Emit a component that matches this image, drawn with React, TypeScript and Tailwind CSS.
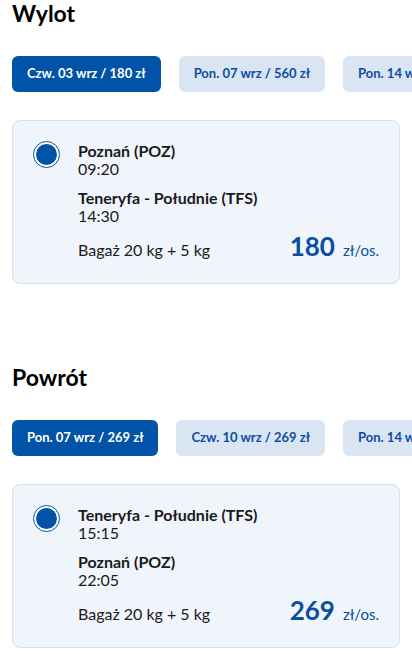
const font = { fontFamily: 'Lato, "Noto Sans", sans-serif' };

type Leg = { place: string; time: string };

const Tabs = ({ items }: { items: string[] }) => (
  <div className="flex gap-[18px] overflow-hidden mt-[30px] pl-3">
    {items.map((t, i) => (
      <button
        key={t}
        className={`shrink-0 h-9 px-[15px] rounded-md text-[13px] font-bold whitespace-nowrap ${
          i === 0 ? 'bg-[#0053a6] text-white' : 'bg-[#dae5f3] text-[#0a4f9e]'
        }`}
      >
        {t}
      </button>
    ))}
  </div>
);

const FlightCard = ({ legs, price }: { legs: Leg[]; price: string }) => (
  <div className="mx-3 mt-7 rounded-lg border border-[#d5e1ef] bg-[#f0f5fb] pl-5 pr-5 pt-5 pb-6 flex gap-[18px]">
    <div className="w-[27px] h-[27px] shrink-0 rounded-full border border-[#0053a6] bg-white flex items-center justify-center">
      <div className="w-[21px] h-[21px] rounded-full bg-[#0053a6]" />
    </div>
    <div className="flex-1 text-[16px] leading-[18px] text-[#1a1a1a] pt-[1px]">
      {legs.map((l, i) => (
        <div key={i} className={i > 0 ? 'mt-[11px]' : ''}>
          <div className="font-bold">{l.place}</div>
          <div>{l.time}</div>
        </div>
      ))}
      <div className="flex items-baseline justify-between mt-3">
        <span>Bagaż 20 kg + 5 kg</span>
        <span className="text-[#0a4f9e]">
          <span className="text-[26px] font-bold">{price}</span>
          <span className="ml-2 text-[15px]">zł/os.</span>
        </span>
      </div>
    </div>
  </div>
);

const Section = ({
  title,
  tabs,
  legs,
  price,
}: {
  title: string;
  tabs: string[];
  legs: Leg[];
  price: string;
}) => (
  <section>
    <h2 className="px-3 text-[23px] leading-[26px] font-bold text-black">{title}</h2>
    <Tabs items={tabs} />
    <FlightCard legs={legs} price={price} />
  </section>
);

export default function App() {
  return (
    <div className="w-[412px] h-[654px] overflow-hidden bg-white" style={font}>
      <Section
        title="Wylot"
        tabs={['Czw. 03 wrz / 180 zł', 'Pon. 07 wrz / 560 zł', 'Pon. 14 wrz / 180 zł']}
        legs={[
          { place: 'Poznań (POZ)', time: '09:20' },
          { place: 'Teneryfa - Południe (TFS)', time: '14:30' },
        ]}
        price="180"
      />
      <div className="h-[80px]" />
      <Section
        title="Powrót"
        tabs={['Pon. 07 wrz / 269 zł', 'Czw. 10 wrz / 269 zł', 'Pon. 14 wrz / 269 zł']}
        legs={[
          { place: 'Teneryfa - Południe (TFS)', time: '15:15' },
          { place: 'Poznań (POZ)', time: '22:05' },
        ]}
        price="269"
      />
    </div>
  );
}
